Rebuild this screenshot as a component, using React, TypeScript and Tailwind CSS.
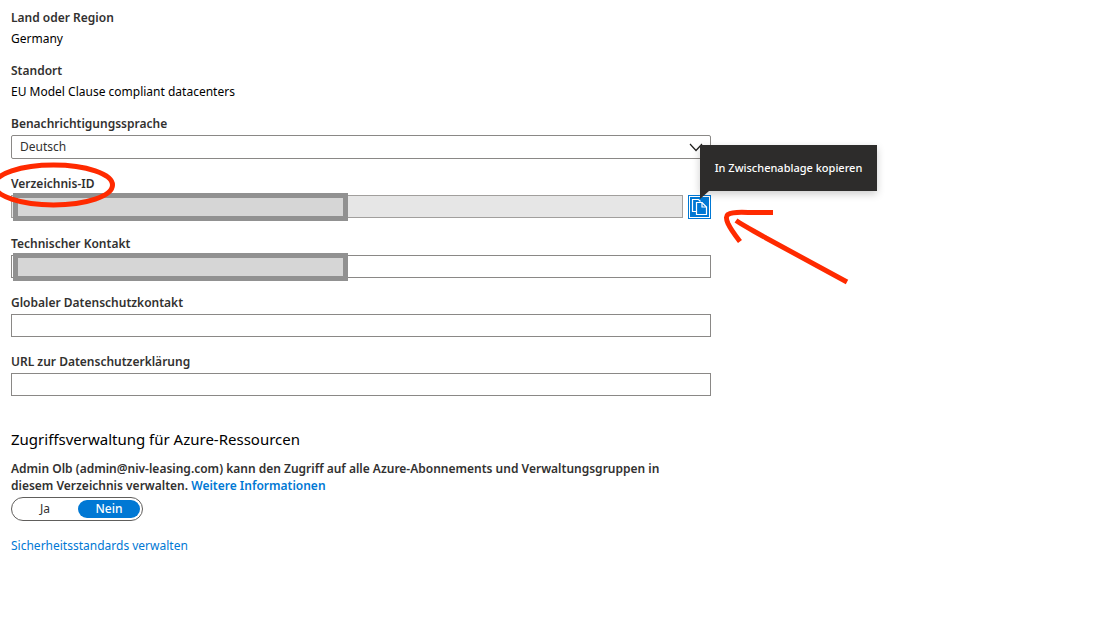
import React, { useState } from "react";

/* ── Shared class names ─────────────────────────────────────────── */

const labelClass = "block w-fit text-[12px] leading-[17px] font-semibold text-[#323130]";
const inputClass =
  "block h-[23px] w-full min-w-0 border border-[#8a8886] bg-white px-2 text-[12px] text-[#323130] outline-none";

/* ── Read-only property ─────────────────────────────────────────── */

const Property = ({ label, value }: { label: string; value: string }) => (
  <div>
    <dt className={labelClass}>{label}</dt>
    <dd className="mt-1 text-[12px] leading-[18px] text-black">{value}</dd>
  </div>
);

/* ── Text field ─────────────────────────────────────────────────── */

const TextField = ({ id, label }: { id: string; label: string }) => (
  <div className="flex flex-col gap-[3px]">
    <label htmlFor={id} className={labelClass}>
      {label}
    </label>
    <input id={id} type="text" className={inputClass} />
  </div>
);

/* ── Grey box that hides a value ────────────────────────────────── */

const Redaction = () => (
  <div className="pointer-events-none absolute -top-[2px] left-[2px] h-7 w-[335px] border-5 border-[#919191] bg-[#d6d6d6]" />
);

/* ── Hand-drawn marks ───────────────────────────────────────────── */

const CircleMark = () => (
  <svg
    className="pointer-events-none absolute -top-[14px] -left-[20px] z-10"
    width="130"
    height="48"
    viewBox="0 0 130 48"
    fill="none"
    aria-hidden="true"
  >
    <ellipse cx="62.5" cy="24" rx="59" ry="20" stroke="#ff2a00" strokeWidth="5" />
  </svg>
);

const ArrowMark = () => (
  <svg
    className="pointer-events-none absolute top-2 left-8"
    width="136"
    height="88"
    viewBox="0 0 136 88"
    fill="none"
    stroke="#ff2a00"
    strokeWidth="5"
    aria-hidden="true"
  >
    <path d="M53 9.5H28C18 9 11 9.500 8 11.500C5.500 13 6.500 17 8 20.500C11 27 15 32 20 38.500" />
    <path d="M16 17.500C24 23 34 28 46 35L127 79" />
  </svg>
);

/* ── Copy button with tooltip ───────────────────────────────────── */

const CopyButton = () => (
  <div className="relative shrink-0">
    <button
      type="button"
      aria-label="In Zwischenablage kopieren"
      className="flex h-6 w-[23px] items-center justify-center border border-[#0078d4] bg-[#0078d4] outline-1 -outline-offset-2 outline-white"
    >
      <svg width="17" height="18" viewBox="0 0 17 18" fill="none" stroke="#fff" strokeWidth="1.200">
        <path d="M5.500 13.500H1.500V1.500H7.500L9.500 3.500" />
        <path d="M5.500 4.500H11L15.500 9V16.500H5.500Z" />
        <path d="M11 4.500V9H15.500" />
      </svg>
    </button>
    <div
      role="tooltip"
      className="absolute bottom-7 left-3 z-20 flex h-[46px] w-[177px] items-center justify-center bg-[#2d2c2b] text-[11px] font-medium whitespace-nowrap text-white shadow-[0_3px_8px_rgba(0,0,0,0.2)]"
    >
      In Zwischenablage kopieren
      <svg className="absolute top-full left-0" width="9" height="8" viewBox="0 0 9 8" aria-hidden="true">
        <path d="M0 0H9L0 8Z" fill="#2d2c2b" />
      </svg>
    </div>
    <ArrowMark />
  </div>
);

/* ── Yes / no switch ────────────────────────────────────────────── */

const YesNo = ({ value, onChange }: { value: string; onChange: (v: string) => void }) => (
  <fieldset
    aria-label="Zugriffsverwaltung"
    className="mt-[3px] flex h-6 w-fit items-center gap-[2px] rounded-full border border-[#605e5c] px-[2px]"
  >
    {["Ja", "Nein"].map((option) => (
      <label
        key={option}
        className="relative flex h-[18px] w-[62px] items-center justify-center rounded-full text-[12px] text-[#323130] has-checked:bg-[#0078d4] has-checked:font-medium has-checked:text-white"
      >
        <input
          type="radio"
          name="access"
          className="absolute inset-0 appearance-none"
          checked={value === option}
          onChange={() => onChange(option)}
        />
        {option}
      </label>
    ))}
  </fieldset>
);

/* ── Page ───────────────────────────────────────────────────────── */

const App = () => {
  const [language, setLanguage] = useState("Deutsch");
  const [access, setAccess] = useState("Nein");

  return (
    <main className="min-h-screen overflow-hidden bg-white px-[11px] py-[9px] font-['Noto_Sans','Open_Sans',sans-serif]">
      <form className="flex max-w-[700px] flex-col gap-4">
        <dl className="-mb-[2px] flex flex-col gap-[14px]">
          <Property label="Land oder Region" value="Germany" />
          <Property label="Standort" value="EU Model Clause compliant datacenters" />
        </dl>

        <div className="flex flex-col gap-[3px]">
          <label htmlFor="language" className={labelClass}>
            Benachrichtigungssprache
          </label>
          <div className="relative">
            <select
              id="language"
              value={language}
              onChange={(e) => setLanguage(e.target.value)}
              className="block h-6 w-full appearance-none rounded-[2px] border border-[#8a8886] bg-white px-2 text-[12px] text-[#323130] outline-none"
            >
              <option>Deutsch</option>
              <option>English</option>
            </select>
            <svg
              className="pointer-events-none absolute top-2 right-2"
              width="14"
              height="9"
              viewBox="0 0 14 9"
              fill="none"
              stroke="#201f1e"
              strokeWidth="1.200"
              aria-hidden="true"
            >
              <path d="M1 1L7 7.500L13 1" />
            </svg>
          </div>
        </div>

        <div className="flex flex-col gap-[3px]">
          <div className="relative w-fit">
            <label htmlFor="directory-id" className={labelClass}>
              Verzeichnis-ID
            </label>
            <CircleMark />
          </div>
          <div className="relative flex gap-[5px]">
            <input
              id="directory-id"
              type="text"
              readOnly
              className="block h-[23px] w-full min-w-0 border border-[#a19f9d] bg-[#e6e6e6] px-2 text-[12px] outline-none"
            />
            <Redaction />
            <CopyButton />
          </div>
        </div>

        <div className="flex flex-col gap-[3px]">
          <label htmlFor="technical-contact" className={labelClass}>
            Technischer Kontakt
          </label>
          <div className="relative">
            <input id="technical-contact" type="text" className={inputClass} />
            <Redaction />
          </div>
        </div>

        <TextField id="privacy-contact" label="Globaler Datenschutzkontakt" />
        <TextField id="privacy-url" label="URL zur Datenschutzerklärung" />

        <section className="mt-4">
          <h2 className="text-[15px] leading-[22px] text-black">
            Zugriffsverwaltung für Azure-Ressourcen
          </h2>
          <p className="mt-[10px] max-w-[680px] text-[12px] leading-[17px] font-semibold text-[#323130]">
            Admin Olb (admin@niv-leasing.com) kann den Zugriff auf alle Azure-Abonnements und
            Verwaltungsgruppen in diesem Verzeichnis verwalten.{" "}
            <a href="#info" className="text-[#0078d4]">
              Weitere Informationen
            </a>
          </p>
          <YesNo value={access} onChange={setAccess} />
        </section>

        <a href="#security" className="w-fit text-[12px] leading-[17px] text-[#0078d4]">
          Sicherheitsstandards verwalten
        </a>
      </form>
    </main>
  );
};

export default App;
